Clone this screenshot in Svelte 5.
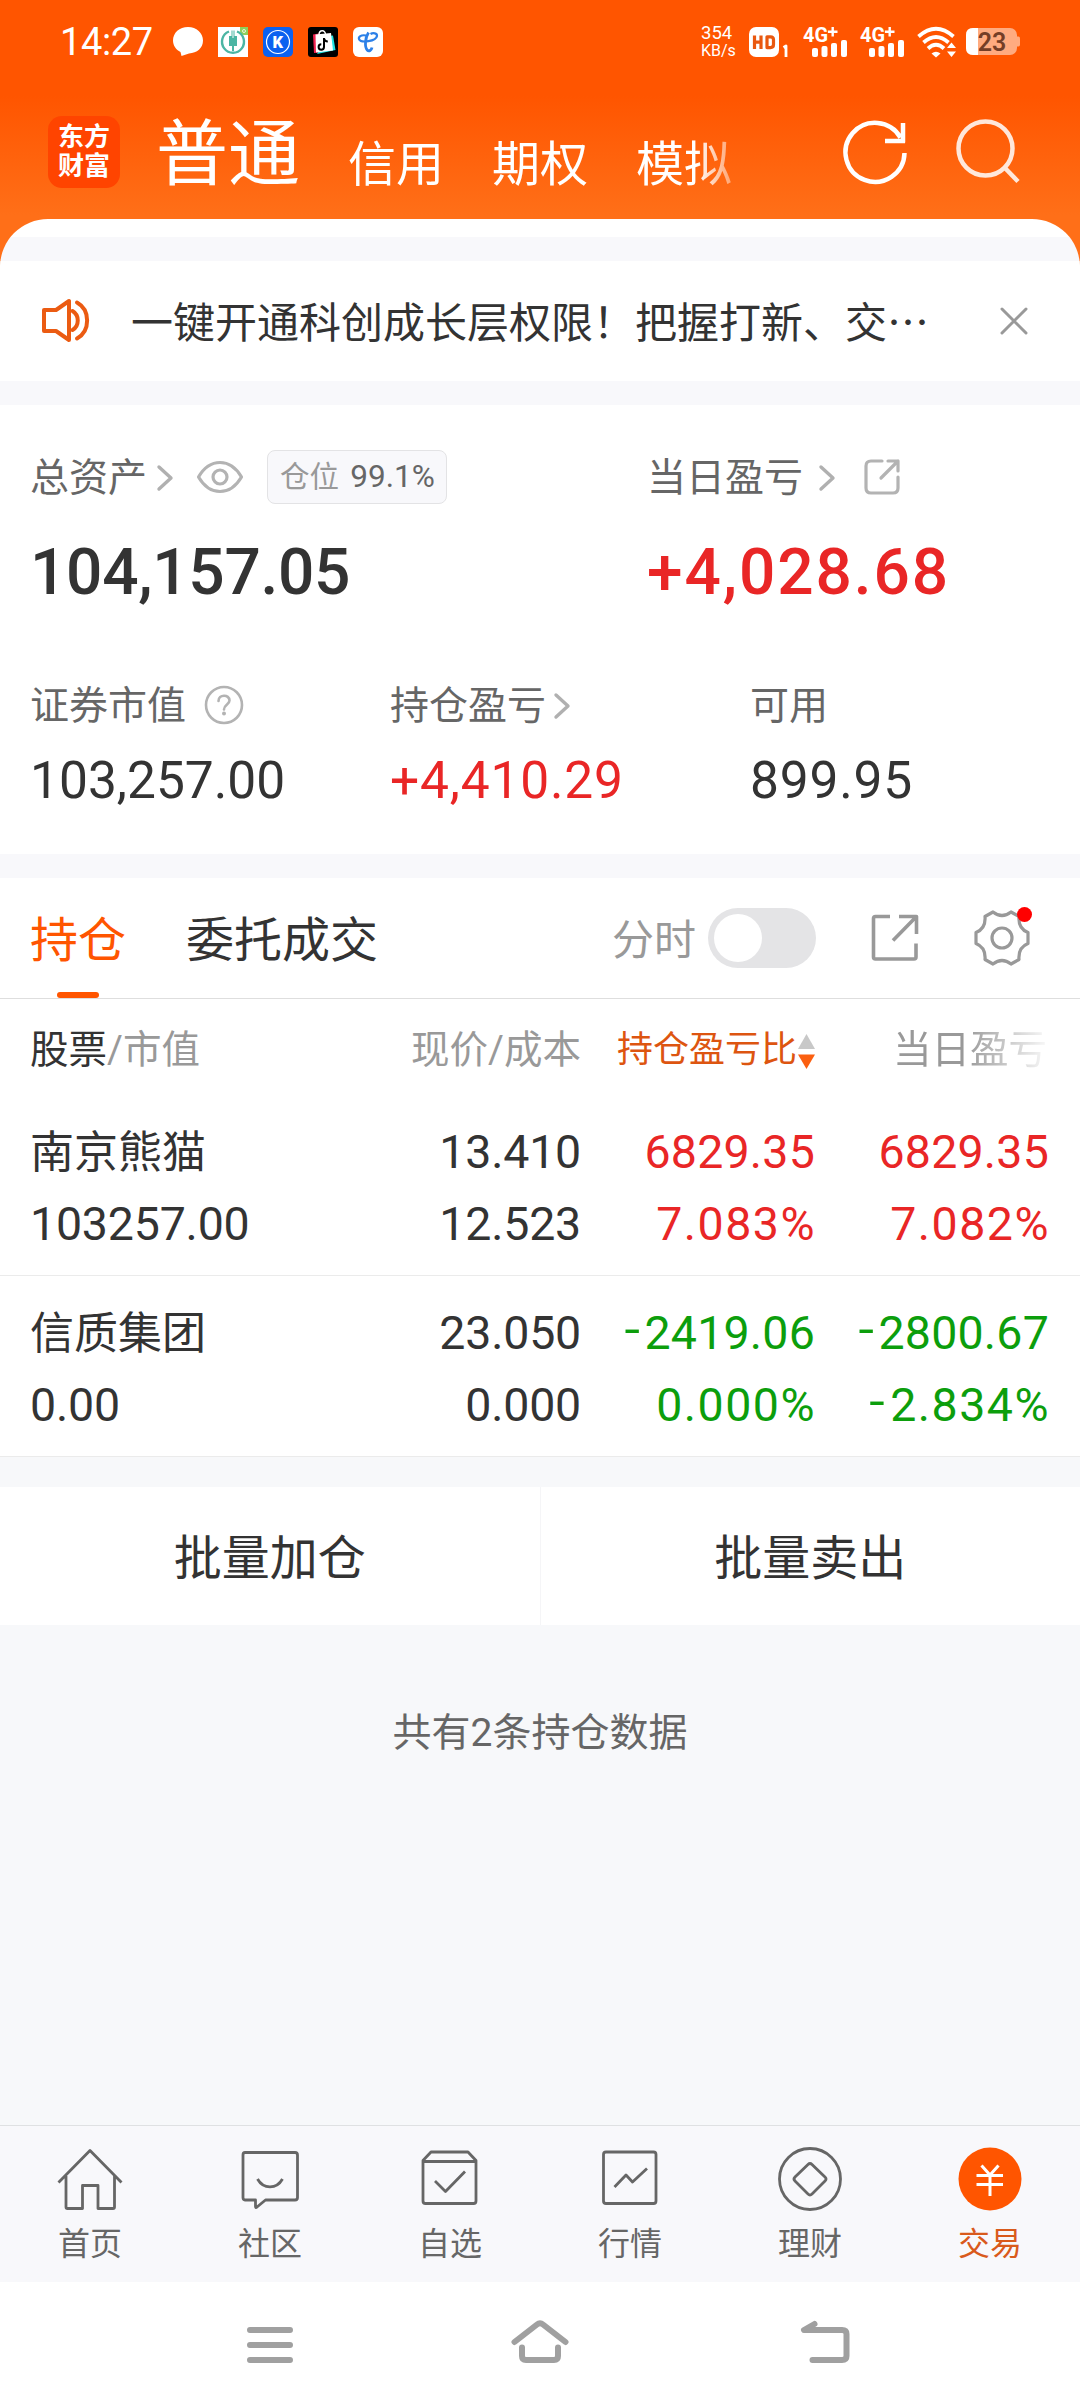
<script lang="ts">
  type Tone = "up" | "down";

  interface Holding {
    name: string;
    value: string;
    price: string;
    cost: string;
    profit: string;
    profitRate: string;
    today: string;
    todayRate: string;
    tone: Tone;
  }

  const accountTabs = ["信用", "期权", "模拟"];

  const holdings: Holding[] = [
    {
      name: "南京熊猫",
      value: "103257.00",
      price: "13.410",
      cost: "12.523",
      profit: "6829.35",
      profitRate: "7.083%",
      today: "6829.35",
      todayRate: "7.082%",
      tone: "up",
    },
    {
      name: "信质集团",
      value: "0.00",
      price: "23.050",
      cost: "0.000",
      profit: "-2419.06",
      profitRate: "0.000%",
      today: "-2800.67",
      todayRate: "-2.834%",
      tone: "down",
    },
  ];

  const navItems = [
    { id: "home", label: "首页" },
    { id: "community", label: "社区" },
    { id: "watchlist", label: "自选" },
    { id: "market", label: "行情" },
    { id: "wealth", label: "理财" },
    { id: "trade", label: "交易" },
  ];

  let activeNav = $state("trade");
  let intraday = $state(false);
</script>

{#snippet amount(text: string)}
  {#if text.startsWith("-")}<span class="minus">-</span>{text.slice(1)}{:else}{text}{/if}
{/snippet}

{#snippet chevron()}
  <svg class="chevron" width="16" height="26" viewBox="0 0 16 26">
    <path d="M2 2 L14 13 L2 24" />
  </svg>
{/snippet}

{#snippet signal()}
  <svg width="46" height="40" viewBox="0 -4 46 40" fill="#fff">
    <text x="0" y="15.5" font-size="20" font-weight="700" textLength="25" lengthAdjust="spacingAndGlyphs">4G</text>
    <path d="M28.5 1h2.4v3.6h3.6v2.4h-3.6v3.6h-2.4V7h-3.6V4.600h3.600z" />
    <rect x="9" y="22" width="6" height="9" rx="2" />
    <rect x="18.500" y="20" width="6" height="11" rx="2" />
    <rect x="28" y="17" width="6" height="14" rx="2" />
    <rect x="38" y="14" width="6" height="17" rx="2" />
  </svg>
{/snippet}

<div class="screen">
  <header>
    <div class="status-bar">
      <span class="clock">14:27</span>
      <div class="notifications">
        <svg width="30" height="30" viewBox="0 0 30 30">
          <path d="M15 0C6.500 0 0 5.800 0 13.500c0 5 3 9.200 7.500 11.500L8.500 29l7.500-2.500C24 26 30 21 30 13.500S23.500 0 15 0z" fill="#fff" />
        </svg>
        <svg width="30" height="30" viewBox="0 0 30 30">
          <rect width="30" height="30" fill="#fff" />
          <path d="M22 0h8v8h-4a4 4 0 0 1-4-4z" fill="#8fd05a" />
          <circle cx="26" cy="4" r="1.500" fill="none" stroke="#fff" stroke-width="0.800" />
          <path d="M11 4.500A11 11 0 1 0 19 4.500" fill="none" stroke="#4bb5a3" stroke-width="2.400" />
          <path d="M11 9h2.500V3.500h1V11h1V3.500h1V9H19v10h-3v5h-2v-5h-3z" fill="#4bb5a3" />
        </svg>
        <svg width="30" height="30" viewBox="0 0 30 30">
          <rect width="30" height="30" rx="5" fill="#0b61f0" />
          <circle cx="15" cy="15" r="11.500" fill="none" stroke="#fff" stroke-width="1.200" />
          <text x="14.800" y="20.800" font-size="16.500" font-weight="900" text-anchor="middle" fill="#fff">K</text>
        </svg>
        <svg width="30" height="30" viewBox="0 0 30 30">
          <rect width="30" height="30" rx="3" fill="#000" />
          <path d="M5 7.500l6-1v19l-5 .5z" fill="#f2204f" />
          <path d="M21 9l4-.5L27.500 23 9 27z" fill="#20e4e4" />
          <path d="M7.500 7.500L23 6l2 17.500-17 2z" fill="#fff" />
          <path d="M11 8c0-5.500 6.500-5.500 6.500-.5" fill="none" stroke="#fff" stroke-width="1.400" />
          <path d="M16 11v9a2.700 2.700 0 1 1-2.700-2.700M16 11.500c.4 2 1.800 3 3.800 3" fill="none" stroke="#000" stroke-width="2" />
        </svg>
        <svg width="30" height="30" viewBox="0 0 30 30">
          <rect width="30" height="30" rx="6" fill="#fff" />
          <path d="M13 8.500C8 7.500 5 10 6.200 12.500C8 16 23 14.500 24 9C24.300 6 20 5.500 17.500 7" fill="none" stroke="#2c80e8" stroke-width="2.200" />
          <path d="M15.500 5.500C12 11 11.500 20 14.200 23C16 25 18.500 23 19 20.500" fill="none" stroke="#2c80e8" stroke-width="2.800" />
        </svg>
      </div>
      <div class="indicators">
        <div class="speed"><span>354</span><span>KB/s</span></div>
        <svg class="hd" width="42" height="32" viewBox="0 0 42 32">
          <rect y="1" width="30" height="30" rx="7" fill="#fff" />
          <path d="M5.500 9.500v13.500M12 9.500v13.500M5.500 16.200H12M18 10.800h3.500q3 0 3 3v4.800q0 3-3 3H18z" fill="none" stroke="#e9580f" stroke-width="3.200" />
          <path d="M34.500 21.500l2.500-1.500v11" fill="none" stroke="#fff" stroke-width="2.800" />
        </svg>
        {@render signal()}
        {@render signal()}
        <svg class="wifi" width="40" height="32" viewBox="0 0 40 32">
          <g fill="none" stroke="#fff" stroke-width="3.800">
            <path d="M1.500 10.500Q19 -5 36.500 10.500" />
            <path d="M6.500 16.500Q19 5.500 31.500 16.500" />
            <path d="M11 22.500Q19 15 27 22.500" />
          </g>
          <path d="M14.500 27.500q4.500-3.500 9 0L19 31.500z" fill="#fff" />
          <path d="M30 22l4.500-5.500L39 22zM30 25.500h9L34.500 31z" fill="#fff" />
        </svg>
        <svg width="54" height="28" viewBox="0 0 54 28">
          <rect width="51" height="27" rx="7" fill="#ffab80" />
          <path d="M51 8.500h1.500q1.500 0 1.500 2v6q0 2-1.500 2H51z" fill="#ffab80" />
          <path d="M7 0h5v27H7q-7 0-7-7V7q0-7 7-7z" fill="#fff" />
          <text x="26" y="22.800" font-size="25" font-weight="600" text-anchor="middle" fill="#753e26">23</text>
        </svg>
      </div>
    </div>

    <div class="title-bar">
      <div class="logo"><span>东方</span><span>财富</span></div>
      <nav class="account-tabs">
        <span class="current">普通</span>
        {#each accountTabs as tab}
          <span>{tab}</span>
        {/each}
      </nav>
      <svg class="refresh" width="66" height="66" viewBox="0 0 66 66">
        <path d="M61.500 34A29.500 29.500 0 1 1 57.500 18.500M60 4v19.500M42 22h20" />
      </svg>
      <svg class="search" width="66" height="66" viewBox="0 0 66 66">
        <circle cx="29.500" cy="29.500" r="27" />
        <path d="M48.500 48.500L62 62.500" />
      </svg>
    </div>
  </header>

  <main>
    <section class="notice">
      <svg width="48" height="44" viewBox="0 0 48 44">
        <path d="M2 11H14L27 2V41L14 32H2Z M30.500 12C37.500 16 37.500 27 30.500 31 M35 3.500C48.500 11 48.500 32 35 39.500" />
      </svg>
      <p>一键开通科创成长层权限！把握打新、交…</p>
      <svg class="close" width="28" height="28" viewBox="0 0 28 28">
        <path d="M2 2L26 26M26 2L2 26" />
      </svg>
    </section>

    <section class="assets">
      <div class="primary">
        <div class="figure">
          <div class="label">
            <span>总资产</span>
            {@render chevron()}
            <svg class="eye" width="46" height="32" viewBox="0 0 46 32">
              <path d="M1.500 16Q10 1.500 23 1.500T44.500 16Q36 30.500 23 30.500T1.500 16Z" />
              <circle cx="23" cy="16" r="7" />
            </svg>
            <span class="position">仓位 <b>99.1%</b></span>
          </div>
          <strong>104,157.05</strong>
        </div>
        <div class="figure">
          <div class="label wide">
            <span>当日盈亏</span>
            {@render chevron()}
            <svg class="share" width="36" height="36" viewBox="0 0 36 36">
              <path d="M18 2H7Q2 2 2 7V29Q2 34 7 34H29Q34 34 34 29V18M24 2H34V12M34 2L17 19" />
            </svg>
          </div>
          <strong class="up">+4,028.68</strong>
        </div>
      </div>
      <div class="secondary">
        <div class="figure">
          <div class="label">
            <span>证券市值</span>
            <svg class="help" width="40" height="40" viewBox="0 0 40 40">
              <circle cx="20" cy="20" r="18" />
              <path d="M14.500 16C14.500 9 25.500 9 25.500 15.500C25.500 19.500 20 19.500 20 24.500" />
              <circle class="dot" cx="20" cy="28.500" r="2" />
            </svg>
          </div>
          <em>103,257.00</em>
        </div>
        <div class="figure">
          <div class="label tight"><span>持仓盈亏</span>{@render chevron()}</div>
          <em class="up">+4,410.29</em>
        </div>
        <div class="figure">
          <div class="label"><span>可用</span></div>
          <em>899.95</em>
        </div>
      </div>
    </section>

    <section class="positions">
      <div class="toolbar">
        <span class="tab active">持仓</span>
        <span class="tab">委托成交</span>
        <span class="switch-label">分时</span>
        <button class="switch" class:on={intraday} aria-label="分时" onclick={() => (intraday = !intraday)}></button>
        <svg class="export" width="48" height="48" viewBox="0 0 48 48">
          <path d="M19 2.500H4.500Q2.500 2.500 2.500 4.500V43Q2.500 45 4.500 45H43Q45 45 45 43V29.500M28 2.500H45.500V20M45 3L22 26.500" />
        </svg>
        <div class="settings">
          <svg width="56" height="56" viewBox="0 0 56 56">
            <path d="M19 2Q28 9 37 2L45 6.500Q44 18.500 54 22.500V33.500Q44 37.500 45 49.500L37 54Q28 47 19 54L11 49.500Q12 37.500 2 33.500V22.500Q12 18.500 11 6.500Z" />
            <circle cx="28" cy="28" r="10" />
          </svg>
          <i class="badge"></i>
        </div>
      </div>

      <div class="row head">
        <span class="stock"><b>股票</b>/市值</span>
        <span>现价/成本</span>
        <span class="sorted">
          持仓盈亏比
          <svg width="17" height="36" viewBox="0 0 17 36">
            <path d="M0 15L8.500 0L17 15Z" fill="#c8c8c8" />
            <path d="M0 20.500L8.500 35L17 20.500Z" fill="#fb5f10" />
          </svg>
        </span>
        <span class="fading">当日盈亏</span>
      </div>

      {#each holdings as item}
        <div class="row holding">
          <div class="stock"><span class="name">{item.name}</span><span>{item.value}</span></div>
          <div><span>{item.price}</span><span>{item.cost}</span></div>
          <div class={item.tone}>
            <span>{@render amount(item.profit)}</span>
            <span class="rate">{@render amount(item.profitRate)}</span>
          </div>
          <div class={item.tone}>
            <span>{@render amount(item.today)}</span>
            <span class="rate">{@render amount(item.todayRate)}</span>
          </div>
        </div>
      {/each}
    </section>

    <div class="batch">
      <span>批量加仓</span>
      <span>批量卖出</span>
    </div>

    <p class="summary">共有2条持仓数据</p>
  </main>

  <nav class="bottom-nav">
    {#each navItems as item}
      <button class:active={activeNav === item.id} onclick={() => (activeNav = item.id)}>
        <svg width="66" height="66" viewBox="0 0 66 66">
          {#if item.id === "home"}
            <path d="M1.500 35.500L33 3.500L64.500 35.500M9 29V60Q9 61.500 10.500 61.500H25.500V38.500H41V61.500H56Q57.500 61.500 57.500 60V29" />
          {:else if item.id === "community"}
            <path d="M8 5.500H58Q60.500 5.500 60.500 8V50.500Q60.500 53 58 53H28.500L20 60Q18.500 61.500 18.500 59.500V53H8Q6 53 6 50.500V8Q6 5.500 8 5.500ZM20.500 32C26.500 42.500 39.500 42.500 45.500 32" />
          {:else if item.id === "watchlist"}
            <path d="M6 13.500L14 5H51L59 13.500V54Q59 56.500 56.500 56.500H8.500Q6 56.500 6 54ZM6 14.500H59M18 34L28.500 44.500L48 24.500" />
          {:else if item.id === "market"}
            <path d="M9 5H56.500Q59 5 59 7.500V54Q59 56.500 56.500 56.500H9Q6.500 56.500 6.500 54V7.500Q6.500 5 9 5ZM17.500 40L29 28L35.500 35L50 21.500" />
          {:else if item.id === "wealth"}
            <circle cx="33" cy="32" r="30.500" />
            <path d="M31 17.500Q33 15.500 35 17.500L48 30Q50 32 48 34L35 47Q33 49 31 47L18 34Q16 32 18 30Z" />
          {:else}
            <circle class="disc" cx="33" cy="32" r="31.500" />
            <path class="yuan" d="M24.500 18.500L33 28L41.500 18.500M19.500 28.500H46M19.500 37.500H46M33 28V49" />
          {/if}
        </svg>
        <span>{item.label}</span>
      </button>
    {/each}
  </nav>

  <div class="system-nav">
    <svg width="46" height="46" viewBox="0 0 46 46">
      <path d="M3 8H43M3 23H43M3 38H43" />
    </svg>
    <svg class="launcher" width="58" height="46" viewBox="0 0 58 46">
      <path d="M3.500 20L26 2.500Q29 0 32 2.500L54.500 20M11 25.500V34Q11 38 15 38H43Q47 38 47 34V25.500" />
    </svg>
    <svg width="50" height="46" viewBox="0 0 50 46">
      <path d="M14.500 2L4 8H42Q46.500 8 46.500 12V34Q46.500 38 42 38H12.500" />
    </svg>
  </div>
</div>

<style>
  :global(body) {
    margin: 0;
  }

  .screen {
    display: flex;
    flex-direction: column;
    width: 1080px;
    height: 2408px;
    overflow: hidden;
    background: linear-gradient(#ff5500 0, #ff5500 96px, #ff6f18 215px, #ff6f18 300px, #fff 300px);
    color: #333;
    font-family: Roboto, "Noto Sans CJK SC", sans-serif;
  }

  svg {
    display: block;
    flex: none;
    overflow: visible;
    font-family: Roboto, sans-serif;
  }

  svg path,
  svg circle {
    stroke-linejoin: round;
  }

  p {
    margin: 0;
  }

  b,
  em,
  i {
    font-weight: 400;
    font-style: normal;
  }

  button {
    padding: 0;
    border: 0;
    background: none;
    font: inherit;
    color: inherit;
  }

  /* Header */
  header {
    height: 219px;
    color: #fff;
  }

  .status-bar {
    display: flex;
    align-items: center;
    height: 84px;
    padding: 0 60px;
  }

  .clock {
    width: 113px;
    font-size: 38px;
    letter-spacing: -0.4px;
  }

  .notifications {
    display: flex;
    gap: 15px;
  }

  .indicators {
    display: flex;
    align-items: center;
    margin-left: auto;
  }

  .speed {
    display: flex;
    flex-direction: column;
    width: 48px;
    font-size: 18.5px;
    line-height: 17px;
  }

  .speed span:last-child {
    font-size: 16px;
  }

  .hd {
    margin-right: 12px;
  }

  .indicators svg + svg:not(.wifi):not(:last-child) {
    margin-right: 11px;
  }

  .wifi {
    margin-right: 9px;
  }

  .title-bar {
    display: flex;
    align-items: center;
    height: 135px;
    padding: 0 58px 0 48px;
  }

  .logo {
    display: flex;
    flex-direction: column;
    align-items: center;
    justify-content: center;
    width: 72px;
    height: 72px;
    border-radius: 14px;
    background: #ff4400;
    font-size: 26px;
    font-weight: 700;
    line-height: 29px;
  }

  .account-tabs {
    display: flex;
    align-items: flex-start;
    gap: 48px;
    width: 660px;
    height: 135px;
    margin-left: 36px;
    font-size: 48px;
    line-height: 96px;
    -webkit-mask-image: linear-gradient(90deg, #000 540px, transparent 600px);
    mask-image: linear-gradient(90deg, #000 540px, transparent 600px);
  }

  .account-tabs span {
    padding-top: 33px;
  }

  .account-tabs .current {
    padding-top: 23px;
    font-size: 72px;
  }

  .refresh,
  .search {
    fill: none;
    stroke: #fff;
    stroke-width: 4.500;
  }

  .refresh {
    margin-left: 28px;
  }

  .search {
    margin-left: 47px;
    opacity: 0.85;
  }

  /* Rounded sheet */
  main {
    flex: 1;
    padding-top: 18px;
    border-radius: 48px 48px 0 0;
    overflow: hidden;
    background: linear-gradient(#fff 18px, #f8f8fb 18px, #f8f8fb 700px, #f7f8fa 700px);
  }

  .notice {
    display: flex;
    align-items: center;
    height: 120px;
    margin-top: 24px;
    padding: 0 52px 0 42px;
    background: #fff;
  }

  .notice svg {
    fill: none;
    stroke: #eb5b12;
    stroke-width: 4;
    stroke-linecap: round;
  }

  .notice p {
    flex: 1;
    margin-left: 41px;
    padding-bottom: 3px;
    font-family: "Noto Sans CJK SC", sans-serif;
    font-size: 42px;
    white-space: nowrap;
  }

  .notice .close {
    stroke: #999;
    stroke-width: 3;
  }

  .assets {
    height: 449px;
    margin-top: 24px;
    background: #fff;
  }

  .primary,
  .secondary {
    display: flex;
    padding-left: 30px;
  }

  .primary {
    padding-top: 42px;
  }

  .primary .figure {
    flex: none;
    width: 617px;
  }

  .secondary {
    padding-top: 64px;
  }

  .secondary .figure {
    flex: none;
    width: 360px;
  }

  .label {
    display: flex;
    align-items: center;
    height: 60px;
    color: #666;
    font-size: 39px;
    white-space: nowrap;
  }

  .label > span:first-child {
    padding-bottom: 7px;
  }

  .chevron {
    margin: 2px 0 0 10px;
    fill: none;
    stroke: #b0b0b0;
    stroke-width: 3.4;
    stroke-linecap: round;
  }

  .wide .chevron {
    margin-left: 16px;
  }

  .tight .chevron {
    margin-left: 8px;
  }

  .eye,
  .share,
  .help {
    fill: none;
    stroke: #b3b3b3;
    stroke-width: 3.2;
    stroke-linecap: round;
  }

  .eye {
    margin-left: 24px;
  }

  .share {
    margin-left: 29px;
  }

  .help {
    margin-left: 18px;
    stroke-width: 2.600;
  }

  .help .dot {
    fill: #b3b3b3;
    stroke: none;
  }

  .position {
    box-sizing: border-box;
    width: 180px;
    height: 54px;
    margin-left: 24px;
    padding-left: 12px;
    border: 1px solid #e3e3e5;
    border-radius: 8px;
    background: #f8f8fb;
    color: #999;
    font-size: 29.5px;
    line-height: 52px;
  }

  .position b {
    margin-left: 4px;
    color: #666;
    font-size: 31.5px;
  }

  .figure strong {
    display: block;
    margin-top: 28px;
    font-size: 64px;
    font-weight: 500;
    line-height: 76px;
    letter-spacing: -0.3px;
  }

  .figure strong.up {
    letter-spacing: 1.9px;
  }

  .figure em {
    display: block;
    margin-top: 16px;
    font-size: 51.5px;
    line-height: 60px;
  }

  .figure + .figure em {
    letter-spacing: 0.8px;
  }

  /* Positions table */
  .positions {
    margin-top: 24px;
    background: #fff;
  }

  .toolbar {
    display: flex;
    align-items: center;
    height: 120px;
    padding: 0 50px 0 30px;
    border-bottom: 1px solid #dedede;
    font-size: 48px;
  }

  .tab {
    position: relative;
    height: 120px;
    margin-right: 60px;
    line-height: 126px;
  }

  .tab.active {
    color: #ff5500;
  }

  .tab.active::after {
    content: "";
    position: absolute;
    bottom: 0;
    left: 27px;
    width: 42px;
    height: 6px;
    border-radius: 3px;
    background: #ff5500;
  }

  .switch-label {
    margin-left: auto;
    padding-bottom: 3px;
    color: #999;
    font-size: 42px;
  }

  .switch {
    width: 108px;
    height: 60px;
    margin-left: 12px;
    padding: 0 6px;
    border-radius: 30px;
    background: #e4e4e6;
  }

  .switch::before {
    content: "";
    display: block;
    width: 48px;
    height: 48px;
    border-radius: 50%;
    background: #fff;
  }

  .switch.on::before {
    margin-left: auto;
  }

  .export {
    margin-left: 55px;
    fill: none;
    stroke: #999;
    stroke-width: 3.600;
  }

  .settings {
    position: relative;
    margin-left: 55px;
  }

  .settings svg {
    fill: none;
    stroke: #999;
    stroke-width: 3.200;
  }

  .badge {
    position: absolute;
    top: -3px;
    right: -2px;
    width: 15px;
    height: 15px;
    border-radius: 50%;
    background: #f00;
  }

  .row {
    display: grid;
    grid-template-columns: 300px 251px 234px 234px;
    padding: 0 31px 0 30px;
    text-align: right;
    white-space: nowrap;
  }

  .stock {
    text-align: left;
  }

  .head {
    height: 96px;
    color: #999;
    font-size: 38.5px;
    line-height: 102px;
  }

  .head b {
    color: #333;
  }

  .sorted {
    display: flex;
    align-items: center;
    justify-content: flex-end;
    gap: 1px;
    color: #dd5510;
    font-size: 36px;
  }

  .sorted svg {
    margin-top: 4px;
  }

  .fading {
    padding-right: 2px;
    -webkit-mask-image: linear-gradient(90deg, #000 150px, transparent 238px);
    mask-image: linear-gradient(90deg, #000 150px, transparent 238px);
  }

  .holding {
    box-sizing: border-box;
    height: 181px;
    padding-top: 21px;
    border-bottom: 1px solid #ebebeb;
    font-size: 46.5px;
    line-height: 72px;
    letter-spacing: -0.2px;
  }

  .holding .up,
  .holding .down {
    letter-spacing: 0.2px;
  }

  .holding span:not(.minus) {
    display: block;
  }

  .holding .rate {
    letter-spacing: 1.5px;
    margin-right: -1px;
  }

  .holding .name {
    height: 72px;
    font-size: 44px;
    line-height: 74px;
    letter-spacing: 0;
  }

  .minus {
    display: inline-block;
    margin-right: 4px;
    transform: translateY(-4px) scaleX(1.2);
    transform-origin: right;
  }

  .up {
    color: #e92626;
  }

  .down {
    color: #0c9e0c;
  }

  .batch {
    display: flex;
    height: 138px;
    margin-top: 30px;
    background: #fff;
    font-size: 48px;
    line-height: 144px;
    text-align: center;
  }

  .batch span {
    flex: 1;
  }

  .batch span + span {
    border-left: 1px solid #f5f5f7;
  }

  .summary {
    margin-top: 77px;
    color: #666;
    font-size: 39px;
    line-height: 62px;
    text-align: center;
  }

  /* Bottom navigation */
  .bottom-nav {
    display: flex;
    box-sizing: border-box;
    height: 157px;
    border-top: 1px solid #dfe1e3;
    background: #f8f8fb;
  }

  .bottom-nav button {
    display: flex;
    flex: 1;
    flex-direction: column;
    align-items: center;
    padding-top: 21px;
    color: #666;
    font-size: 32px;
    line-height: 62px;
  }

  .bottom-nav svg {
    fill: none;
    stroke: #666;
    stroke-width: 2.800;
  }

  .bottom-nav .active {
    color: #d95a1c;
  }

  .bottom-nav .disc {
    fill: #ff5500;
    stroke: none;
  }

  .bottom-nav .yuan {
    stroke: #fff;
    stroke-width: 3;
  }

  .system-nav {
    display: flex;
    align-items: center;
    height: 126px;
    padding-left: 247px;
    background: #fff;
  }

  .system-nav svg {
    fill: none;
    stroke: #a0a0a0;
    stroke-width: 6;
    stroke-linecap: round;
  }

  .launcher {
    margin: 0 231px 0 218px;
  }
</style>
